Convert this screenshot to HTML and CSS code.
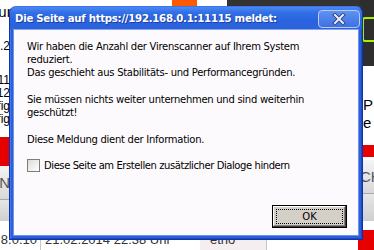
FILE: index.html
```html
<!DOCTYPE html>
<html lang="de">
<head>
<meta charset="utf-8">
<title>Meldung</title>
<link rel="stylesheet" href="styles.css">
</head>
<body>
<div class="page">
  <div class="bg">
    <div class="bg-main">
      <div class="col-left">
        <div class="lt-white">
          <div class="lt-line big">Einstellung</div>
          <div class="lt-gap1"></div>
          <div class="lt-line">1.2</div>
          <div class="lt-gap2"></div>
          <div class="lt-line">11</div>
          <div class="lt-line">12</div>
          <div class="lt-line">Konfig</div>
          <div class="lt-line">Konfig</div>
        </div>
        <div class="red-band"></div>
        <div class="gray-btn"><span>AN</span></div>
        <div class="gray-low"></div>
      </div>
      <div class="col-mid">
        <div class="top-strip">
          <div class="ts-white"></div>
          <div class="ts-orange"></div>
          <div class="ts-white2"></div>
          <div class="ts-dark"></div>
        </div>
      </div>
      <div class="col-right">
        <div class="rt-dark"><div class="rt-green"></div></div>
        <div class="rt-white">
          <div class="rt-line">P</div>
          <div class="rt-line">e</div>
        </div>
        <div class="rt-red"></div>
        <div class="gray-btn"><span>CH</span></div>
        <div class="gray-low"></div>
      </div>
    </div>
    <div class="bottom-row">
      <div class="br-cell br-ver">8.0.10</div>
      <div class="br-cell br-date">21.02.2014 22:38 Uhr</div>
      <div class="br-cell br-user">etho</div>
      <div class="br-red"></div>
    </div>
  </div>

  <div class="dialog">
    <div class="titlebar">
      <span class="title">Die Seite auf https://192.168.0.1:11115 meldet:</span>
      <div class="close">
        <svg width="14" height="12" viewBox="0 0 14 12">
          <path d="M3 2 L11 10 M11 2 L3 10" stroke="#2c3f7a" stroke-width="3.8" stroke-linecap="square" fill="none"/>
          <path d="M3 2 L11 10 M11 2 L3 10" stroke="#e8eefc" stroke-width="2" stroke-linecap="square" fill="none"/>
        </svg>
      </div>
    </div>
    <div class="client">
      <div class="message">
        <p>Wir haben die Anzahl der Virenscanner auf Ihrem System<br>reduziert.<br>Das geschieht aus Stabilitäts- und Performancegründen.</p>
        <p>Sie müssen nichts weiter unternehmen und sind weiterhin<br>geschützt!</p>
        <p>Diese Meldung dient der Information.</p>
      </div>
      <label class="check-row"><span class="checkbox"></span><span class="check-label">Diese Seite am Erstellen zusätzlicher Dialoge hindern</span></label>
      <div class="buttons">
        <div class="ok"><span class="focus">OK</span></div>
      </div>
    </div>
  </div>
</div>
</body>
</html>
```

FILE: styles.css
```css
html, body {
  margin: 0;
  padding: 0;
}
body {
  width: 374px;
  height: 250px;
  overflow: hidden;
  background: #ffffff;
  font-family: "Liberation Sans", Arial, sans-serif;
}
.page {
  position: relative;
  width: 374px;
  height: 250px;
  overflow: hidden;
}

/* ---------- background page ---------- */
.bg {
  display: flex;
  flex-direction: column;
  width: 374px;
  height: 250px;
}
.bg-main {
  display: flex;
  height: 232px;
}
.col-left {
  width: 60px;
  margin-left: -50px;
  display: flex;
  flex-direction: column;
}
.lt-white {
  height: 137px;
  background: #fff;
  text-align: right;
  font-size: 12px;
  color: #000;
}
.lt-line {
  height: 13px;
  line-height: 13px;
}
.lt-line.big {
  font-size: 15px;
  height: 16px;
  line-height: 16px;
  margin-top: 4px;
}
.lt-gap1 { height: 20px; }
.lt-gap2 { height: 21px; }
.red-band {
  height: 29px;
  background: #e60000;
}
.gray-btn {
  height: 33px;
  background: linear-gradient(#f4f4f4, #d8d8d8);
  border-bottom: 1px solid #a8a8a8;
  font-size: 15px;
  color: #555;
  display: flex;
  align-items: center;
  justify-content: flex-end;
}
.gray-low {
  flex: 1;
  background: linear-gradient(#e6e6e6, #cfcfcf);
}
.col-mid {
  flex: 1;
  display: flex;
  flex-direction: column;
}
.top-strip {
  display: flex;
  height: 12px;
}
.ts-white { width: 162px; background: #fff; }
.ts-orange { width: 25px; background: #ff5a00; }
.ts-white2 { width: 30px; background: #fff; }
.ts-dark { flex: 1; background: #333333; }
.col-right {
  width: 14px;
  display: flex;
  flex-direction: column;
}
.rt-dark {
  height: 66px;
  background: #2e2e2e;
  padding-top: 17px;
  box-sizing: border-box;
}
.rt-green {
  height: 21px;
  margin-left: 2px;
  border: 2px solid #a6f000;
  border-right: none;
  border-radius: 3px 0 0 3px;
}
.rt-white {
  height: 79px;
  background: #fff;
  padding-top: 30px;
  box-sizing: border-box;
  font-size: 15px;
  color: #000;
  padding-left: 3px;
}
.rt-line { height: 18px; line-height: 18px; }
.col-right .gray-btn { justify-content: flex-start; margin-top: 3px; }
.rt-red {
  height: 12px;
  background: #e60000;
}
.bottom-row {
  flex: 1;
  display: flex;
  background: #fff;
  font-size: 13px;
  color: #333;
  line-height: 20px;
  padding-top: 9px;
}
.br-cell {
  white-space: nowrap;
}
.br-ver {
  width: 37px;
  text-align: right;
  padding-right: 3px;
  border-right: 1px solid #c8c8c8;
}
.br-date {
  width: 155px;
  padding-left: 4px;
}
.br-user {
  width: 56px;
  padding-left: 10px;
  border-right: 1px solid #c8c8c8;
  background: #f4eef0;
}
.br-red {
  margin-left: auto;
  width: 16px;
  background: #e60000;
}

/* ---------- dialog ---------- */
.dialog {
  position: absolute;
  left: 9px;
  top: 6px;
  width: 354px;
  height: 234px;
  box-sizing: border-box;
  background: #2d5fda;
  border: 1px solid #0f33a8;
  border-top-color: #3a73ea;
  border-radius: 7px 7px 0 0;
  display: flex;
  flex-direction: column;
  padding: 0 3px 3px;
  box-shadow: inset 1px 0 0 #3f78ee, inset -1px 0 0 #1d48c4, inset 0 -1px 0 #1d48c4;
}
.titlebar {
  height: 22px;
  display: flex;
  align-items: center;
  justify-content: space-between;
  margin: 0 -3px;
  padding: 0 2px 0 5px;
  border-radius: 6px 6px 0 0;
  background: linear-gradient(#4d89f2 0%, #3170e6 25%, #2b63de 60%, #2c62dc 100%);
}
.title {
  color: #ffffff;
  font-family: "DejaVu Sans", Verdana, sans-serif;
  font-weight: bold;
  font-size: 10.2px;
  letter-spacing: -0.28px;
  text-shadow: 1px 1px 0 #1a3fa8;
  white-space: nowrap;
  margin-top: 1px;
}
.close {
  width: 40px;
  height: 16px;
  border: 1px solid #b9cbf3;
  border-radius: 4px;
  background: linear-gradient(#5f92f1, #3d70e3);
  display: flex;
  align-items: center;
  justify-content: center;
  margin-top: 1px;
}
.close svg { display: block; }
.client {
  flex: 1;
  background: #fdfafd;
  border: 1px solid #6d93e8;
  border-top-color: #86a7ee;
  padding: 10px 11px 7px 13px;
  display: flex;
  flex-direction: column;
  font-family: "DejaVu Sans", Verdana, sans-serif;
  font-size: 10px;
  letter-spacing: -0.27px;
  color: #000;
}
.message p {
  margin: 0 0 14px 0;
  line-height: 13px;
  white-space: nowrap;
}
.message p:last-child {
  margin-bottom: 13px;
}
.check-row {
  display: flex;
  align-items: center;
  gap: 4px;
  height: 13px;
  line-height: 13px;
}
.check-label {
  letter-spacing: -0.42px;
  white-space: nowrap;
}
.checkbox {
  width: 11px;
  height: 11px;
  flex: none;
  border: 1px solid #7d7d7d;
  background: linear-gradient(135deg, #dcdcd6, #ffffff);
}
.buttons {
  margin-top: auto;
  display: flex;
  justify-content: flex-end;
}
.ok {
  width: 75px;
  height: 23px;
  box-sizing: border-box;
  background: #d4d0c8;
  border: 1px solid #000;
  box-shadow: inset -1px -1px 0 #404040, inset 1px 1px 0 #ffffff, inset -2px -2px 0 #808080;
  display: flex;
  align-items: center;
  justify-content: center;
  padding: 3px;
}
.focus {
  flex: 1;
  align-self: stretch;
  border: 1px dotted #000;
  display: flex;
  align-items: center;
  justify-content: center;
  font-size: 10px;
  letter-spacing: 0;
  color: #000;
}
```
